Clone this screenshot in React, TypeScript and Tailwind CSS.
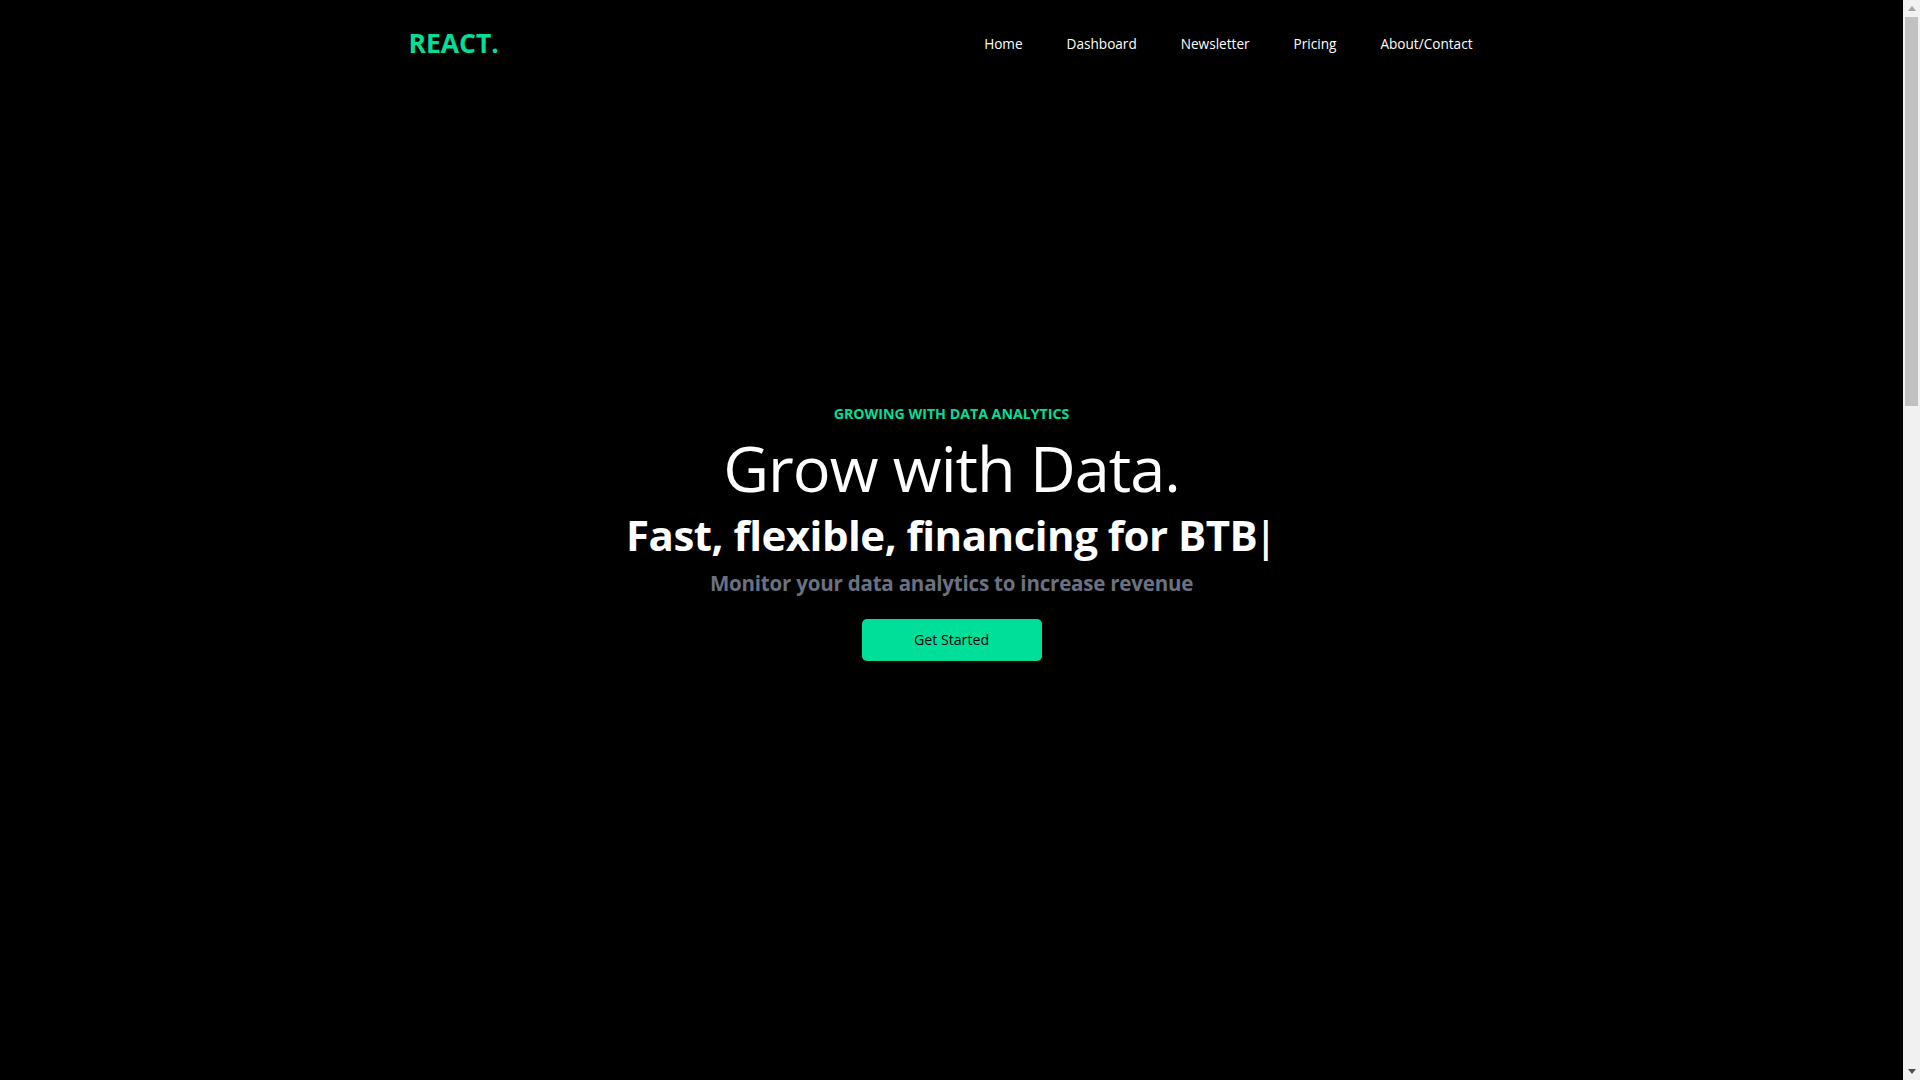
const LINKS = ["Home", "Dashboard", "Newsletter", "Pricing", "About/Contact"];

function Navbar() {
  return (
    <nav className="mx-auto flex h-[86px] w-[1116px] items-center justify-between px-[15px] text-white">
      <h1 className="text-[26.5px] font-bold leading-none text-[#00df9a]">REACT.</h1>
      <ul className="flex pt-[2px]">
        {LINKS.map((label) => (
          <li key={label} className="px-[22px] text-[13.6px] leading-[22px]">
            {label}
          </li>
        ))}
      </ul>
    </nav>
  );
}

function Hero() {
  return (
    <section className="mx-auto flex w-[720px] flex-col items-center pt-[317px] text-center text-white">
      <p className="text-[14.2px] font-bold leading-[22px] text-[#00df9a]">GROWING WITH DATA ANALYTICS</p>
      <h1 className="mt-[10px] text-[63px] font-normal leading-[66px] tracking-[-1px]">Grow with Data.</h1>
      <div className="mt-[10px] flex items-center justify-center">
        <p className="text-[42px] font-bold leading-[48px] tracking-[-0.5px]">
          Fast, flexible, financing for BTB<span className="ml-[-3px] font-semibold">|</span>
        </p>
      </div>
      <p className="mt-[10px] text-[20.5px] font-bold leading-[29px] tracking-[-0.2px] text-gray-500">
        Monitor your data analytics to increase revenue
      </p>
      <button className="mt-[21px] h-[42px] w-[180px] rounded-[5px] bg-[#00df9a] text-[14.2px] font-medium text-black">
        Get Started
      </button>
    </section>
  );
}

function Scrollbar() {
  return (
    <aside className="flex w-[17px] shrink-0 flex-col bg-[#f1f1f1]">
      <div className="flex h-[17px] items-center justify-center">
        <svg width="8" height="5" viewBox="0 0 8 5">
          <path d="M4 0 8 5H0z" fill="#a3a3a3" />
        </svg>
      </div>
      <div className="mx-auto h-[389px] w-[13px] bg-[#c1c1c1]" />
      <div className="flex-1" />
      <div className="flex h-[17px] items-center justify-center">
        <svg width="8" height="5" viewBox="0 0 8 5">
          <path d="M0 0h8L4 5z" fill="#505050" />
        </svg>
      </div>
    </aside>
  );
}

export default function App() {
  return (
    <div className="flex h-screen overflow-hidden bg-black font-['Open_Sans',sans-serif]">
      <main className="min-w-0 flex-1">
        <Navbar />
        <Hero />
      </main>
      <Scrollbar />
    </div>
  );
}
